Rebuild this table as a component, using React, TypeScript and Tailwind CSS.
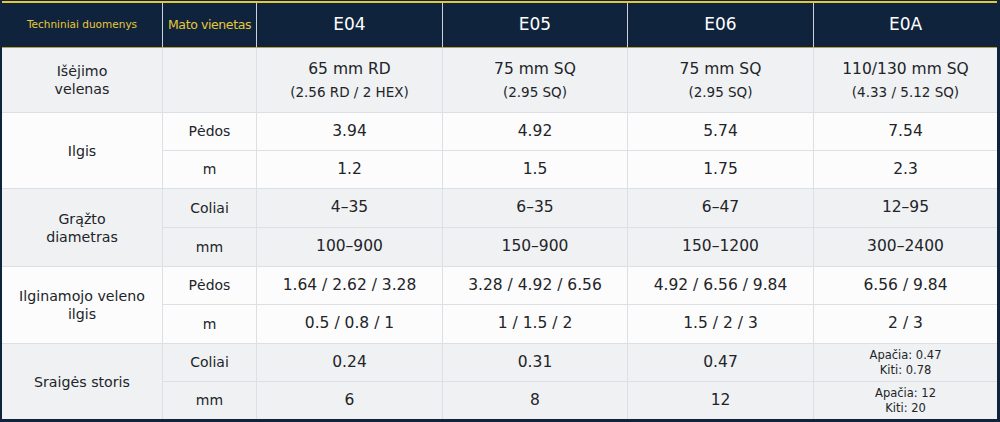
import React from "react";

type Group = {
  label: React.ReactNode;
  gray: boolean;
  rows: { unit: string; vals: React.ReactNode[] }[];
};

const two = (a: string, b: string) => (
  <div className="flex flex-col items-center">
    <span className="text-[15.5px] leading-[23px]">{a}</span>
    <span className="text-[13.5px] leading-[22px]">{b}</span>
  </div>
);

const small = (a: string, b: string) => (
  <div className="flex flex-col items-center text-[11.5px] leading-[15px]">
    <span>{a}</span>
    <span>{b}</span>
  </div>
);

const groups: Group[] = [
  {
    label: (
      <>
        Išėjimo
        <br />
        velenas
      </>
    ),
    gray: true,
    rows: [
      {
        unit: "",
        vals: [
          two("65 mm RD", "(2.56 RD / 2 HEX)"),
          two("75 mm SQ", "(2.95 SQ)"),
          two("75 mm SQ", "(2.95 SQ)"),
          two("110/130 mm SQ", "(4.33 / 5.12 SQ)"),
        ],
      },
    ],
  },
  {
    label: "Ilgis",
    gray: false,
    rows: [
      { unit: "Pėdos", vals: ["3.94", "4.92", "5.74", "7.54"] },
      { unit: "m", vals: ["1.2", "1.5", "1.75", "2.3"] },
    ],
  },
  {
    label: (
      <>
        Grąžto
        <br />
        diametras
      </>
    ),
    gray: true,
    rows: [
      { unit: "Coliai", vals: ["4–35", "6–35", "6–47", "12–95"] },
      { unit: "mm", vals: ["100–900", "150–900", "150–1200", "300–2400"] },
    ],
  },
  {
    label: (
      <>
        Ilginamojo veleno
        <br />
        ilgis
      </>
    ),
    gray: false,
    rows: [
      {
        unit: "Pėdos",
        vals: ["1.64 / 2.62 / 3.28", "3.28 / 4.92 / 6.56", "4.92 / 6.56 / 9.84", "6.56 / 9.84"],
      },
      { unit: "m", vals: ["0.5 / 0.8 / 1", "1 / 1.5 / 2", "1.5 / 2 / 3", "2 / 3"] },
    ],
  },
  {
    label: "Sraigės storis",
    gray: true,
    rows: [
      { unit: "Coliai", vals: ["0.24", "0.31", "0.47", small("Apačia: 0.47", "Kiti: 0.78")] },
      { unit: "mm", vals: ["6", "8", "12", small("Apačia: 12", "Kiti: 20")] },
    ],
  },
];

const models = ["E04", "E05", "E06", "E0A"];

export default function App() {
  return (
    <div
      className="w-[1000px] h-[422px] bg-[#10233d] pt-px pl-[2px] pr-[3px] pb-[3px] text-[#222428]"
      style={{ fontFamily: '"DejaVu Sans", "Noto Sans", sans-serif' }}
    >
      <div className="h-[2px] bg-[#e4c733]" />
      <div className="grid grid-cols-[160px_94px_186px_185px_186px_184px] grid-rows-[45px_64px_38px_38px_39px_39px_38px_39px_38px_38px]">
        {/* header */}
        <div className="flex items-center justify-center bg-[#10233d] border-b border-[#b9a142] text-[10.5px] text-[#e6c938]">
          Techniniai duomenys
        </div>
        <div className="flex items-center justify-center bg-[#10233d] border-b border-l border-b-[#b9a142] border-l-[#cdd1d6] text-[12.5px] tracking-[-0.4px] text-[#e6c938]">
          Mato vienetas
        </div>
        {models.map((m) => (
          <div
            key={m}
            className="flex items-center justify-center bg-[#10233d] border-b border-l border-b-[#b9a142] border-l-[#cdd1d6] text-[17px] text-white"
          >
            {m}
          </div>
        ))}

        {groups.map((g, gi) => {
          const bg = g.gray ? "bg-[#eff1f3]" : "bg-[#fcfcfd]";
          const top = gi === 0 ? "" : "border-t";
          return (
            <React.Fragment key={gi}>
              <div
                className={`flex items-center justify-center text-center text-[14.2px] leading-[18px] border-[#dcdfe3] ${top} ${bg} ${
                  g.rows.length === 2 ? "row-span-2" : ""
                }`}
              >
                <span>{g.label}</span>
              </div>
              {g.rows.map((r, ri) => (
                <React.Fragment key={ri}>
                  <div
                    className={`flex items-center justify-center text-[14px] border-l border-[#dcdfe3] ${
                      ri === 0 ? top : "border-t"
                    } ${bg}`}
                  >
                    {r.unit}
                  </div>
                  {r.vals.map((v, vi) => (
                    <div
                      key={vi}
                      className={`flex items-center justify-center text-center text-[15.5px] border-l border-[#dcdfe3] ${
                        ri === 0 ? top : "border-t"
                      } ${bg}`}
                    >
                      {v}
                    </div>
                  ))}
                </React.Fragment>
              ))}
            </React.Fragment>
          );
        })}
      </div>
    </div>
  );
}
